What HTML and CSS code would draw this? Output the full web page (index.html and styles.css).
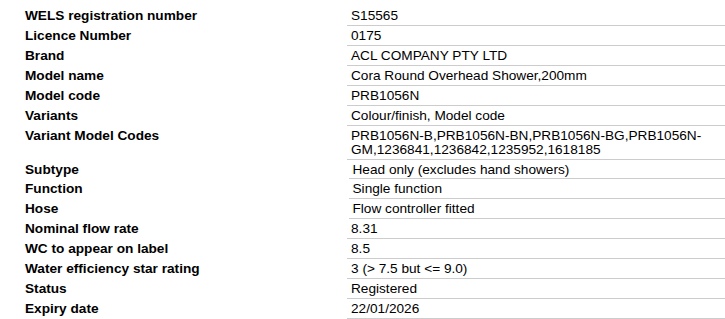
FILE: index.html
```html
<!DOCTYPE html>
<html lang="en">
<head>
<meta charset="utf-8">
<title>WELS product details</title>
<link rel="stylesheet" href="styles.css">
</head>
<body>
<div class="details">
  <div class="row"><div class="label">WELS registration number</div><div class="value">S15565</div></div>
  <div class="row"><div class="label">Licence Number</div><div class="value">0175</div></div>
  <div class="row"><div class="label">Brand</div><div class="value">ACL COMPANY PTY LTD</div></div>
  <div class="row"><div class="label">Model name</div><div class="value">Cora Round Overhead Shower,200mm</div></div>
  <div class="row"><div class="label">Model code</div><div class="value">PRB1056N</div></div>
  <div class="row"><div class="label">Variants</div><div class="value">Colour/finish, Model code</div></div>
  <div class="row"><div class="label">Variant Model Codes</div><div class="value">PRB1056N-B,PRB1056N-BN,PRB1056N-BG,PRB1056N-GM,1236841,1236842,1235952,1618185</div></div>
  <div class="row"><div class="label">Subtype</div><div class="value value-inset">Head only (excludes hand showers)</div></div>
  <div class="row"><div class="label">Function</div><div class="value value-inset">Single function</div></div>
  <div class="row"><div class="label">Hose</div><div class="value value-inset">Flow controller fitted</div></div>
  <div class="row"><div class="label">Nominal flow rate</div><div class="value">8.31</div></div>
  <div class="row"><div class="label">WC to appear on label</div><div class="value">8.5</div></div>
  <div class="row"><div class="label">Water efficiency star rating</div><div class="value">3 (&gt; 7.5 but &lt;= 9.0)</div></div>
  <div class="row"><div class="label">Status</div><div class="value">Registered</div></div>
  <div class="row"><div class="label">Expiry date</div><div class="value">22/01/2026</div></div>
</div>
</body>
</html>
```
FILE: styles.css
```css
html, body {
  margin: 0;
  padding: 0;
  background: #ffffff;
}

body {
  font-family: "Liberation Sans", Arial, sans-serif;
  font-size: 13.65px;
  color: #000000;
}

.details {
  padding: 6px 0 0 25px;
  display: flex;
  flex-direction: column;
}

.row {
  display: grid;
  grid-template-columns: 322px 1fr;
  align-items: start;
}

.label,
.value {
  line-height: 13.93px;
  padding-top: 3px;
  padding-bottom: 2px;
}

.label {
  font-weight: bold;
}

.value {
  padding-left: 4px;
  padding-right: 4px;
  border-bottom: 1px solid #cccccc;
}

.value-inset {
  margin-left: 2px;
  padding-left: 3.5px;
}
```
